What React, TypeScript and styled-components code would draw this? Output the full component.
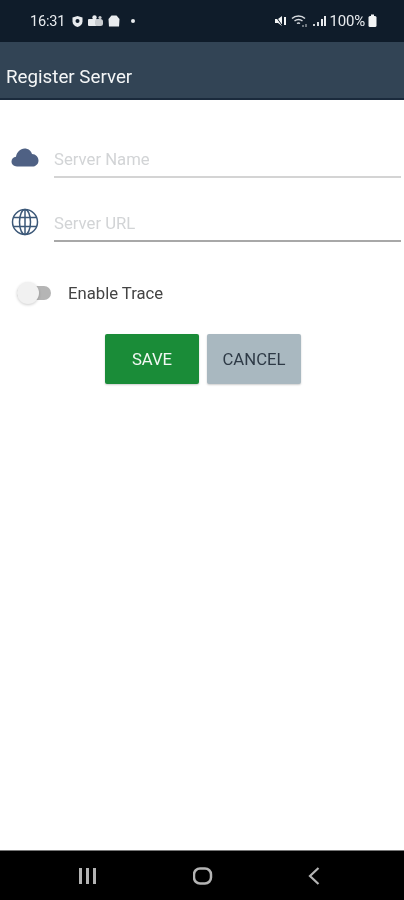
import * as React from 'react';
import styled, { createGlobalStyle } from 'styled-components';

const GlobalStyle = createGlobalStyle`
  html, body {
    margin: 0;
    padding: 0;
    background: #fff;
  }
  body {
    font-family: Roboto, "Liberation Sans", sans-serif;
  }
`;

const Page = styled.div`
  width: 404px;
  height: 900px;
  display: flex;
  flex-direction: column;
  overflow: hidden;
  background: #fff;
`;

const StatusBar = styled.div`
  height: 42px;
  flex-shrink: 0;
  display: flex;
  align-items: center;
  justify-content: space-between;
  padding: 0 27px 0 30px;
  box-sizing: border-box;
  background: #0f1c2a;
  color: #e8ebee;
  font-size: 14.5px;
  filter: blur(0.4px);
`;

const StatusGroup = styled.div`
  display: flex;
  align-items: center;
  gap: 3px;
`;

const Clock = styled.span`
  margin-right: 3px;
  letter-spacing: -0.2px;
`;

const Battery = styled.span`
  font-size: 15px;
  letter-spacing: -0.2px;
`;

const Toolbar = styled.header`
  height: 58px;
  flex-shrink: 0;
  display: flex;
  align-items: center;
  box-sizing: border-box;
  padding: 22px 0 8px 6px;
  background: #324455;
  border-bottom: 2px solid #1a2a3c;
  color: #f4f6f7;
  font-size: 18.75px;
  filter: blur(0.4px);
`;

const Main = styled.main`
  flex: 1;
  display: flex;
  flex-direction: column;
  padding-top: 41px;
  filter: blur(0.5px);
`;

const FieldRow = styled.div`
  height: 64px;
  display: flex;
  align-items: flex-start;
`;

const FieldIcon = styled.div`
  width: 54px;
  height: 34px;
  flex-shrink: 0;
  padding-left: 11px;
  box-sizing: border-box;
  display: flex;
  align-items: center;
`;

const Field = styled.div<{ $line: string }>`
  width: 347px;
  height: 37px;
  box-sizing: border-box;
  padding-top: 9px;
  border-bottom: 2px solid ${(props) => props.$line};
  color: #d2d4d6;
  font-size: 16.7px;
  line-height: 20px;
`;

const TraceRow = styled.div`
  display: flex;
  align-items: center;
  height: 24px;
  margin-top: 12px;
  padding-left: 17px;
`;

const Switch = styled.div`
  position: relative;
  width: 34px;
  height: 14px;
  border-radius: 7px;
  background: #b5b5b5;
  margin-right: 17px;
`;

const Knob = styled.div`
  position: absolute;
  left: 0;
  top: -4px;
  width: 22px;
  height: 22px;
  border-radius: 50%;
  background: #f1f1f1;
  box-shadow: 0 1px 3px rgba(0, 0, 0, 0.2);
`;

const TraceLabel = styled.span`
  color: #444;
  font-size: 16.7px;
`;

const Buttons = styled.div`
  display: flex;
  gap: 8px;
  margin-top: 29px;
  padding-left: 105px;
`;

const Button = styled.button<{ $bg: string; $fg: string }>`
  width: 94px;
  height: 50px;
  border: 0;
  border-radius: 2px;
  padding: 0;
  background: ${(props) => props.$bg};
  color: ${(props) => props.$fg};
  font-family: inherit;
  font-size: 16.7px;
  box-shadow: 0 1px 2px rgba(0, 0, 0, 0.2);
`;

const NavBar = styled.nav`
  height: 50px;
  flex-shrink: 0;
  display: flex;
  align-items: center;
  justify-content: space-between;
  box-sizing: border-box;
  padding: 0 84px 0 78px;
  background: #000;
  border-top: 1px solid #777;
`;

const ShieldIcon = () => (
  <svg width="13" height="13" viewBox="0 0 13 13">
    <path d="M6.5 1 11.5 2.6V6.5C11.5 9.4 9.3 11.3 6.5 12 3.7 11.3 1.5 9.4 1.5 6.5V2.6Z" fill="#e8ebee" />
    <circle cx="6.5" cy="6" r="2" fill="#0f1c2a" />
  </svg>
);

const TeamsIcon = () => (
  <svg width="17" height="13" viewBox="0 0 17 13">
    <rect x="1" y="4" width="9" height="7" rx="1" fill="#e8ebee" />
    <rect x="8" y="4" width="8" height="7" rx="2.5" fill="#c8ccd0" />
    <circle cx="7.5" cy="2.5" r="2.2" fill="#e8ebee" />
    <circle cx="13" cy="2.5" r="1.6" fill="#c8ccd0" />
  </svg>
);

const BagIcon = () => (
  <svg width="14" height="14" viewBox="0 0 14 14">
    <path d="M4.5 1.5 9.5 1.5 12.5 5 12 12.5H2L1.5 5Z" fill="#e8ebee" />
  </svg>
);

const Dot = () => (
  <svg width="12" height="12" viewBox="0 0 12 12" style={{ marginLeft: 3 }}>
    <circle cx="6" cy="6" r="2" fill="#e8ebee" />
  </svg>
);

const MuteIcon = () => (
  <svg width="14" height="12" viewBox="0 0 14 12">
    <path d="M1 4H4L8 1V11L4 8H1Z" fill="#f2f4f5" />
    <path d="M1.5 1 8.5 11" stroke="#0f1c2a" strokeWidth="1" />
    <rect x="10" y="2" width="2" height="8" fill="#f2f4f5" />
  </svg>
);

const WifiIcon = () => (
  <svg width="18" height="14" viewBox="0 0 18 14" fill="none" stroke="#d8dce0" strokeWidth="1.5">
    <path d="M1 4.5C4.5 1 10.5 1 14 4.5" />
    <path d="M3.5 7C6 5 9 5 11.5 7" />
    <path d="M6 9.5C7 8.8 8 8.8 9 9.5" />
    <path d="M12 11V13M15 10V13" stroke="#8d949b" />
  </svg>
);

const SignalIcon = () => (
  <svg width="15" height="12" viewBox="0 0 15 12">
    <rect x="1" y="9" width="2" height="2" fill="#c8ccd0" />
    <rect x="5" y="7" width="2" height="4" fill="#d8dce0" />
    <rect x="9" y="4" width="2" height="7" fill="#e8ebee" />
    <rect x="12" y="1" width="2" height="10" fill="#e8ebee" />
  </svg>
);

const BatteryIcon = () => (
  <svg width="9" height="14" viewBox="0 0 9 14">
    <rect x="3" y="0.5" width="3" height="2" fill="#f2f4f5" />
    <rect x="0.5" y="2" width="8" height="11" rx="1.5" fill="#f2f4f5" />
  </svg>
);

const CloudIcon = () => (
  <svg width="28" height="20" viewBox="0 1 28 20">
    <path
      d="M6 19.5C2.7 19.5.5 17.4.5 14.6.5 12 2.4 10 5 9.7 5.7 5.2 9.2 1.5 13.6 1.5c3.6 0 6.4 2.200 7.400 5.500 3.800.2 6.500 3 6.500 6.400 0 3.500-2.700 6.100-6.300 6.100Z"
      fill="#4f6184"
    />
  </svg>
);

const GlobeIcon = () => (
  <svg width="28" height="28" viewBox="0 0 28 28" fill="none" stroke="#3c5878" strokeWidth="1.500">
    <circle cx="14" cy="14" r="12.500" />
    <ellipse cx="14" cy="14" rx="5.500" ry="12.500" />
    <path d="M14 1.500V26.500M2.500 9.500H25.500M2.500 18.500H25.500" />
  </svg>
);

const RecentsIcon = () => (
  <svg width="20" height="18" viewBox="0 0 20 18" fill="#b4b4b4">
    <rect x="1" y="1" width="3" height="16" />
    <rect x="8" y="1" width="3" height="16" />
    <rect x="15" y="1" width="3" height="16" />
  </svg>
);

const HomeIcon = () => (
  <svg width="20" height="18" viewBox="0 0 20 18" fill="none" stroke="#b4b4b4" strokeWidth="2.500">
    <rect x="1" y="1.500" width="17" height="15" rx="6" />
  </svg>
);

const BackIcon = () => (
  <svg width="12" height="18" viewBox="0 0 12 18" fill="none" stroke="#b4b4b4" strokeWidth="2.200">
    <path d="M10.500 1 2 9 10.500 17" />
  </svg>
);

const App: React.FC = () => {
  return (
    <Page>
      <GlobalStyle />
      <StatusBar>
        <StatusGroup>
          <Clock>16:31</Clock>
          <ShieldIcon />
          <TeamsIcon />
          <BagIcon />
          <Dot />
        </StatusGroup>
        <StatusGroup>
          <MuteIcon />
          <WifiIcon />
          <SignalIcon />
          <Battery>100%</Battery>
          <BatteryIcon />
        </StatusGroup>
      </StatusBar>
      <Toolbar>Register Server</Toolbar>
      <Main>
        <FieldRow>
          <FieldIcon>
            <CloudIcon />
          </FieldIcon>
          <Field $line="#d4d4d4">Server Name</Field>
        </FieldRow>
        <FieldRow>
          <FieldIcon>
            <GlobeIcon />
          </FieldIcon>
          <Field $line="#a8a8a8">Server URL</Field>
        </FieldRow>
        <TraceRow>
          <Switch>
            <Knob />
          </Switch>
          <TraceLabel>Enable Trace</TraceLabel>
        </TraceRow>
        <Buttons>
          <Button $bg="#1a8c38" $fg="#f2f8f3">SAVE</Button>
          <Button $bg="#a9b8c0" $fg="#2e3a46">CANCEL</Button>
        </Buttons>
      </Main>
      <NavBar>
        <RecentsIcon />
        <HomeIcon />
        <BackIcon />
      </NavBar>
    </Page>
  );
};

export default App;
